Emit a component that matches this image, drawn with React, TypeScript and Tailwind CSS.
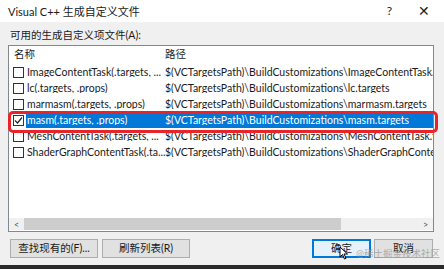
import React from "react";

const rows = [
  { name: "ImageContentTask(.targets, ...", path: "$(VCTargetsPath)\\BuildCustomizations\\ImageContentTask.targets" },
  { name: "lc(.targets, .props)", path: "$(VCTargetsPath)\\BuildCustomizations\\lc.targets" },
  { name: "marmasm(.targets, .props)", path: "$(VCTargetsPath)\\BuildCustomizations\\marmasm.targets" },
  { name: "masm(.targets, .props)", path: "$(VCTargetsPath)\\BuildCustomizations\\masm.targets", checked: true },
  { name: "MeshContentTask(.targets, ...", path: "$(VCTargetsPath)\\BuildCustomizations\\MeshContentTask.targets" },
  { name: "ShaderGraphContentTask(.ta...", path: "$(VCTargetsPath)\\BuildCustomizations\\ShaderGraphContentTask.targets" },
];

export default function App() {
  return (
    <div
      className="relative w-[444px] h-[269px] overflow-hidden bg-[#f0f0f0] flex flex-col text-[#1a1a1a]"
      style={{ fontFamily: 'Lato, "Noto Sans CJK SC", sans-serif' }}
    >
      {/* 标题栏 */}
      <div className="h-[22px] bg-white flex items-center justify-between pl-2 pr-[14px] shrink-0">
        <span className="text-[11px] leading-none">Visual C++ 生成自定义文件</span>
        <div className="flex items-center gap-[26px] text-[12px] leading-none text-[#222]">
          <span>?</span>
          <span className="text-[14px]">✕</span>
        </div>
      </div>

      {/* 内容 */}
      <div className="flex-1 flex flex-col px-2 pt-[6px]">
        <div className="text-[10.5px] leading-[14px] pl-[2px] mb-[3px]">可用的生成自定义项文件(A):</div>

        <div className="h-[187px] mr-[2px] bg-white border border-[#828790] flex flex-col">
          <div className="h-[17px] flex items-center text-[10.5px] shrink-0">
            <span className="w-[156px] pl-[5px]">名称</span>
            <span>路径</span>
          </div>
          <div className="flex flex-col pt-[1px]">
            {rows.map((r) => (
              <div key={r.name} className="h-[16px] flex items-center text-[10.5px] leading-none whitespace-nowrap">
                <div className="w-[17px] pl-[4px] shrink-0 flex items-center">
                  <div className="w-[11px] h-[11px] border border-[#333] bg-white flex items-center justify-center">
                    {r.checked && (
                      <svg width="9" height="9" viewBox="0 0 9 9">
                        <path d="M1 4.5 L3.5 7 L8 1.5" stroke="#222" strokeWidth="1.2" fill="none" />
                      </svg>
                    )}
                  </div>
                </div>
                <div
                  className={`flex-1 h-full flex items-center overflow-hidden ${
                    r.checked ? "bg-[#0078d7] text-white" : ""
                  }`}
                >
                  <span className="w-[139px] pl-[1px] shrink-0 overflow-hidden">{r.name}</span>
                  <span className="overflow-hidden">{r.path}</span>
                </div>
              </div>
            ))}
          </div>
          <div className="flex-1" />
          {/* 水平滚动条 */}
          <div className="h-[12px] mb-[1px] flex items-center bg-[#f0f0f0] shrink-0">
            <span className="w-[15px] text-center text-[9px] leading-none text-[#555]">&lt;</span>
            <div className="w-[317px] h-full bg-[#cdcdcd]" />
            <div className="flex-1" />
            <span className="w-[15px] text-center text-[9px] leading-none text-[#555]">&gt;</span>
          </div>
        </div>

        {/* 按钮 */}
        <div className="flex items-center mt-[7px] pl-[2px] pr-[3px] text-[10.5px] leading-none">
          <button className="w-[88px] h-[19px] bg-[#e1e1e1] border border-[#adadad]">查找现有的(F)...</button>
          <button className="w-[88px] h-[19px] ml-[4px] bg-[#e1e1e1] border border-[#adadad]">刷新列表(R)</button>
          <div className="flex-1" />
          <button className="w-[59px] h-[19px] bg-[#e5f1fb] border-2 border-[#0078d7]">确定</button>
          <button className="w-[59px] h-[19px] ml-[3px] bg-[#e1e1e1] border border-[#adadad]">取消</button>
        </div>
      </div>

      <div className="h-[4px] bg-[#2a2a2a] shrink-0" />

      {/* 红色标注框 */}
      <div className="absolute left-[8px] top-[111px] w-[430px] h-[22px] border-[3px] border-[#e8232a] rounded-[5px]" />

      {/* 鼠标指针 */}
      <svg className="absolute left-[339px] top-[246px]" width="10" height="14" viewBox="0 0 10 14">
        <path d="M1 1 L1 11 L3.5 8.5 L5.5 13 L7 12.3 L5 8 L8.5 8 Z" fill="#fff" stroke="#000" strokeWidth="1" />
      </svg>

      {/* 水印 */}
      <span className="absolute left-[356px] top-[249px] text-[9.5px] leading-none text-[#9a9a9a]/80">@稀土掘金技术社区</span>
    </div>
  );
}
